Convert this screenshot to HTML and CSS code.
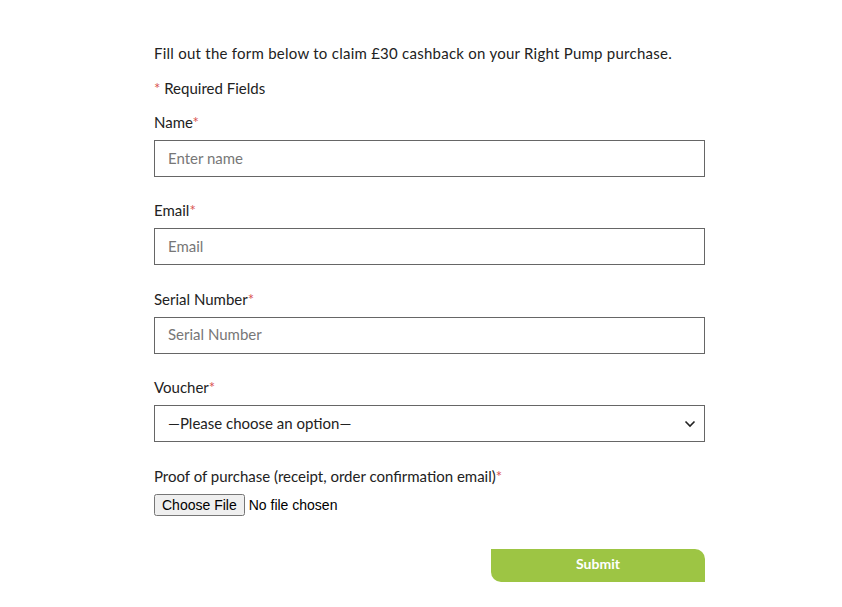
FILE: index.html
```html
<!DOCTYPE html>
<html lang="en">
<head>
<meta charset="UTF-8">
<meta name="viewport" content="width=device-width, initial-scale=1.0">
<title>Right Pump Cashback Claim</title>
<link rel="stylesheet" href="styles.css">
</head>
<body>
<div class="claim">
    <p class="intro">Fill out the form below to claim £30 cashback on your Right Pump purchase.</p>
    <p class="required-note"><span class="star">*</span> Required Fields</p>

    <form class="claim-form" onsubmit="return false;">
        <div class="field">
            <label for="name">Name<span class="star">*</span></label>
            <input type="text" id="name" placeholder="Enter name">
        </div>
        <div class="field">
            <label for="email">Email<span class="star">*</span></label>
            <input type="email" id="email" placeholder="Email">
        </div>
        <div class="field">
            <label for="serial">Serial Number<span class="star">*</span></label>
            <input type="text" id="serial" placeholder="Serial Number">
        </div>
        <div class="field">
            <label for="voucher">Voucher<span class="star">*</span></label>
            <div class="select-wrap">
                <select id="voucher">
                    <option value="">—Please choose an option—</option>
                </select>
                <svg class="chevron" width="12" height="8" viewBox="0 0 12 8"><path d="M1.5 1.5 L6 6 L10.5 1.5" fill="none" stroke="#222" stroke-width="1.6"/></svg>
            </div>
        </div>
        <div class="field">
            <label for="proof">Proof of purchase (receipt, order confirmation email)<span class="star">*</span></label>
            <input type="file" id="proof" class="file">
        </div>
        <div class="actions">
            <button type="submit">Submit</button>
        </div>
    </form>
</div>
</body>
</html>
```

FILE: styles.css
```css
body {
    margin: 0;
    font-family: Lato, "Noto Sans", sans-serif;
    color: #222;
    background: #fff;
}
.claim {
    width: 551px;
    margin-left: 154px;
    padding-top: 42px;
}
.intro {
    margin: 0;
    font-size: 15px;
    line-height: 22px;
    letter-spacing: 0.25px;
}
.required-note {
    margin: 13px 0 0;
    font-size: 15px;
    line-height: 22px;
}
.star {
    color: #d9534f;
}
.claim-form {
    margin-top: 12px;
}
.field {
    margin-bottom: 22.4px;
}
.field label {
    display: block;
    font-size: 15px;
    line-height: 22px;
    margin-bottom: 7px;
}
.field input[type="text"],
.field input[type="email"],
.field select {
    display: block;
    width: 100%;
    height: 37px;
    box-sizing: border-box;
    border: 1px solid #666;
    border-radius: 0;
    padding: 0 13px 2px;
    font-family: inherit;
    font-size: 15px;
    color: #222;
    background: #fff;
    outline: none;
}
.field input::placeholder {
    color: #777;
}
.select-wrap {
    position: relative;
}
.field select {
    appearance: none;
    -webkit-appearance: none;
}
.chevron {
    position: absolute;
    right: 9px;
    top: 15px;
    pointer-events: none;
}
.file {
    display: block;
    height: 22px;
    font-family: "Liberation Sans", Arial, sans-serif;
    font-size: 14px;
    color: #000;
}
.actions {
    display: flex;
    justify-content: flex-end;
    margin-top: 33px;
}
button {
    width: 214px;
    height: 33px;
    padding: 0 0 3px;
    border: none;
    border-radius: 0 10px 0 10px;
    background-color: #9dc544;
    color: #fff;
    font-family: inherit;
    font-size: 14px;
    font-weight: bold;
    cursor: pointer;
}
```
